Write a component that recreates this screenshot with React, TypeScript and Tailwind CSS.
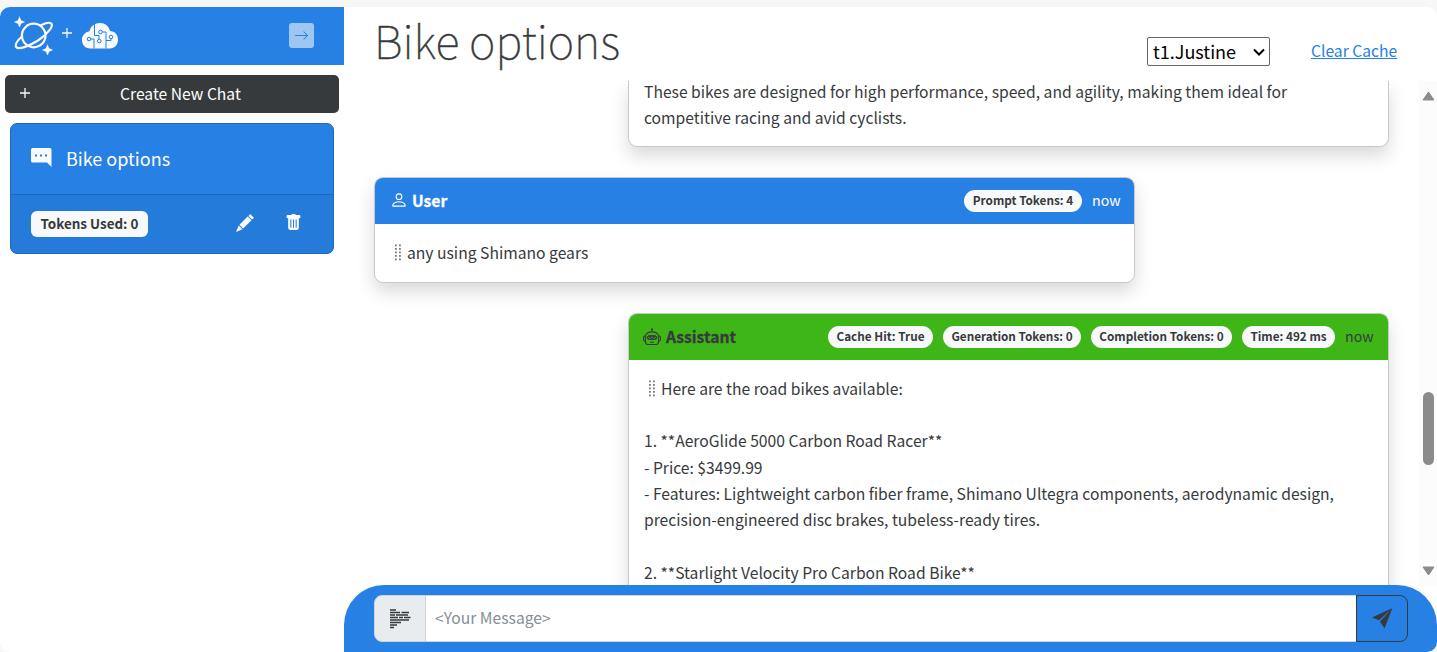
import React from "react";
import { BsArrowRight, BsTrashFill, BsPerson } from "react-icons/bs";

const FONT = "font-['Noto_Sans_CJK_SC',sans-serif]";

function Planet() {
  return (
    <svg width="40" height="40" viewBox="0 0 40 40" fill="none" stroke="#f8f9fa" strokeWidth="2.200" strokeLinecap="round">
      <circle cx="19.700" cy="20.500" r="11.800" />
      <path d="M8 21.500C3 26 .8 30 2.200 32C4.500 35 14.500 31.500 24 25.500C33 19.500 39.500 11.500 37.500 8.800C36.300 7.200 32.500 7.600 27.500 10" />
      <path d="M5.500 2L7 5.500L10.500 7L7 8.500L5.500 12L4 8.500L0.500 7L4 5.500Z M33.500 30L35 33.500L38.500 35L35 36.500L33.500 40L32 36.500L28.500 35L32 33.500Z" fill="#f8f9fa" stroke="#f8f9fa" strokeWidth=".5" />
    </svg>
  );
}

function Cloud() {
  return (
    <svg width="36" height="26" viewBox="0 0 36 26" fill="none">
      <path d="M8.500 25.500C3.500 25.500 0 22 0 17C0 12.500 3 9 7.500 8.300C8.500 3 13 0 18 0C23 0 27 3 28 8C32.500 8 36 11.500 36 16.500C36 22 32.500 25.500 28 25.500Z" fill="#f8f9fa" />
      <g stroke="#2780e3" strokeWidth="1">
        <path d="M12.500 1V12.500H17V16M8.500 16H12V25.500M20.500 9H24V25.500M24 17.500H29V15.500" />
        <circle cx="7" cy="16" r="1.800" /><circle cx="18.500" cy="9" r="1.800" /><circle cx="17.300" cy="18" r="1.800" /><circle cx="29" cy="14" r="1.800" />
      </g>
    </svg>
  );
}

function Plus({ size }: { size: number }) {
  return <svg width={size} height={size} viewBox="0 0 10 10" stroke="#f8f9fa" strokeWidth="1.300"><path d="M5 0V10M0 5H10" /></svg>;
}

function Robot() {
  return (
    <svg width="18" height="18" viewBox="0 0 18 18" fill="none" stroke="#373a3c" strokeWidth="1.100">
      <path d="M9 1V3.500M2.500 8C3.500 2.500 14.500 2.500 15.500 8V14C15.500 15.500 14.500 16.500 13 16.500H5C3.500 16.500 2.500 15.500 2.500 14ZM2.500 8H1.500Q.6 8 .6 9V12Q.6 13 1.500 13H2.500M15.500 8H16.500Q17.400 8 17.400 9V12Q17.400 13 16.500 13H15.500M7 14.300H11" />
      <path d="M2.500 8H15.500" stroke="#3fb618" strokeWidth="1.400" />
      <path d="M2.500 7V9M15.500 7V9" />
      <rect x="4.200" y="7.500" width="9.600" height="4" rx="2" fill="#373a3c" strokeWidth=".8" />
      <path d="M5 9L7 10.500L9 9L11 10.500L13 9" stroke="#3fb618" strokeWidth=".8" />
      <circle cx="9" cy="1.300" r="1" fill="#373a3c" stroke="none" />
    </svg>
  );
}

function Grip() {
  return <svg className="mr-[5px] ml-[5px] inline-block align-[-2px]" width="7" height="17" viewBox="0 0 7 17" fill="#77777a">{[0, 1, 2, 3, 4].map((i) => <g key={i}><rect x="0" y={0.5 + i * 3.5} width="1.800" height="1.800" /><rect x="4" y={0.5 + i * 3.5} width="1.800" height="1.800" /></g>)}</svg>;
}

function Badge({ children, w }: { children: React.ReactNode; w: string }) {
  return <span className={`flex h-[22px] shrink-0 items-center justify-center rounded-full bg-[#f8f9fa] pb-px text-[11.750px] font-bold whitespace-nowrap text-[#373a3c] ${w}`}>{children}</span>;
}

const CARD = "shrink-0 overflow-hidden rounded-[9px] border border-[#c9c9c9] bg-white shadow-[0_9px_18px_rgba(0,0,0,0.15)]";

export default function App() {
  return (
    <div className={`h-[652px] w-[1437px] overflow-hidden bg-[#f7f7f7] pt-[7px] text-[15.660px] leading-[26.300px] text-[#373a3c] ${FONT}`}>
      <div className="flex h-[645px] overflow-hidden rounded-[10px] bg-white">
        <aside className="w-[344px] shrink-0">
          <header className="flex h-[58px] items-start bg-[#2780e3] pt-[8px] pl-[14px]">
            <Planet />
            <div className="mt-[13px] ml-[8px]"><Plus size={10} /></div>
            <div className="mt-[8px] ml-[10px]"><Cloud /></div>
            <div className="mt-[8px] ml-[171px] flex size-[25px] items-center justify-center rounded-[3px] bg-[#9ec6f2] text-[#2780e3]"><BsArrowRight size={15} /></div>
          </header>
          <button className="mt-[10px] ml-[5px] flex h-[38px] w-[334px] items-center rounded-[5px] bg-[#373a3c] text-white">
            <span className="mb-[2px] ml-[15px] flex w-[10px]"><Plus size={10} /></span>
            <span className="ml-[90px]">Create New Chat</span>
          </button>
          <div className="mt-[10px] ml-[10px] h-[131px] w-[324px] overflow-hidden rounded-[7px] border border-[#2168b8] bg-[#2780e3] text-white">
            <div className="flex h-[71px] items-center border-b border-[#2168b8] pb-[2px] pl-[20px] text-[18px]">
              <svg width="21" height="20" viewBox="0 0 21 20"><path d="M1.500 0H19Q20.500 0 20.500 1.500V19L16 14.500H1.500Q0 14.500 0 13V1.500Q0 0 1.500 0Z" fill="#f8f9fa" /><path d="M4 6.500H6V8.500H4ZM9 6.500H11V8.500H9ZM14 6.500H16V8.500H14Z" fill="#2780e3" /></svg>
              <span className="ml-[14px]">Bike options</span>
            </div>
            <div className="flex h-[59px] items-center bg-[#257bda] pb-[2px] pl-[20px]">
              <span className="flex h-[26px] w-[117px] items-center justify-center rounded-[6px] bg-[#f8f9fa] text-[13.450px] font-bold text-[#373a3c]">Tokens Used: 0</span>
              <svg className="mb-[2px] ml-[88px]" width="18" height="18" viewBox="0 0 18 18" fill="#f8f9fa"><path d="M14.200 0L18 3.800L16 5.600L12.400 2ZM11.700 2.500L15.500 6.300L7.200 14.600L3.400 10.800ZM2.700 11.400L6.600 15.300L0 18Z" /></svg>
              <BsTrashFill className="mb-[2px] ml-[31px]" size={17} />
            </div>
          </div>
        </aside>
        <main className="flex w-[1093px] flex-col">
          <header className="flex h-[74px] shrink-0 items-start pl-[31px]">
            <h1 className="-ml-px w-[773px] text-[45px] leading-[66px] font-thin [-webkit-text-stroke:0.400px_#373a3c]">Bike options</h1>
            <div className="mt-[30px] flex h-[29px] w-[123px] items-center rounded-[2px] border border-[#666] pl-[5px] text-[18px] text-black"><span>t1.Justine</span><svg className="mr-[4px] ml-auto" width="12" height="8" viewBox="0 0 12 8" fill="none" stroke="black" strokeWidth="2"><path d="M1 1.500L6 6.500L11 1.500" /></svg></div>
            <a className="mt-[31px] ml-[41px] text-[#2780e3] underline">Clear Cache</a>
          </header>
          <div className="flex h-[504px] shrink-0">
            <section className="flex h-[504px] w-[1075px] flex-col overflow-hidden pl-[30px]">
              <div className={`ml-[254px] h-[66px] w-[761px] rounded-t-none border-t-0 px-[15px] ${CARD}`}>
                <p className="-mt-[2px]">These bikes are designed for high performance, speed, and agility, making them ideal for<br />competitive racing and avid cyclists.</p>
              </div>
              <article className={`mt-[30px] h-[106px] w-[761px] ${CARD}`}>
                <div className="flex h-[46px] items-center bg-[#2780e3] pr-[14px] pl-[15px] text-white">
                  <BsPerson className="mb-[2px]" size={18} /><b className="ml-[4px] [-webkit-text-stroke:0.300px_white]">User</b>
                  <div className="ml-auto flex items-center"><Badge w="w-[118px]">Prompt Tokens: 4</Badge><span className="ml-[10px] w-[28px] pb-px text-[14.200px]">now</span></div>
                </div>
                <p className="px-[15px] pt-[16px]"><Grip />any using Shimano gears</p>
              </article>
              <article className={`mt-[30px] ml-[254px] h-[360px] w-[761px] ${CARD}`}>
                <div className="flex h-[46px] items-center bg-[#3fb618] pr-[15px] pl-[14px]">
                  <Robot /><b className="ml-[5px] [-webkit-text-stroke:0.300px_#373a3c]">Assistant</b>
                  <div className="ml-auto flex items-center gap-[10px]"><Badge w="w-[105px]">Cache Hit: True</Badge><Badge w="w-[138px]">Generation Tokens: 0</Badge><Badge w="w-[141px]">Completion Tokens: 0</Badge><Badge w="w-[93px]">Time: 492 ms</Badge><span className="w-[28px] pb-px text-[14.200px]">now</span></div>
                </div>
                <p className="px-[15px] pt-[15.700px]"><Grip />Here are the road bikes available:<br /><br />1. **AeroGlide 5000 Carbon Road Racer**<br />- Price: $3499.99<br />- Features: Lightweight carbon fiber frame, Shimano Ultegra components, aerodynamic design,<br />precision-engineered disc brakes, tubeless-ready tires.<br /><br />2. **Starlight Velocity Pro Carbon Road Bike**</p>
              </article>
            </section>
            <div className="flex w-[18px] flex-col items-center bg-[#fcfcfc]">
              <svg className="mt-[10px]" width="13" height="10" viewBox="0 0 13 10"><path d="M6.500 1L12 9H1Z" fill="#8b8b8b" stroke="#8b8b8b" strokeLinejoin="round" /></svg>
              <div className="mt-[291px] h-[73px] w-[11px] rounded-full bg-[#8b8b8b]" />
              <svg className="mt-[101px]" width="13" height="10" viewBox="0 0 13 10"><path d="M6.500 9L12 1H1Z" fill="#8b8b8b" stroke="#8b8b8b" strokeLinejoin="round" /></svg>
            </div>
          </div>
          <footer className="flex h-[67px] shrink-0 items-start rounded-t-[40px] bg-[#2780e3] pt-[10px] pl-[30px]">
            <div className="flex h-[47px] w-[52px] items-center justify-center rounded-l-[8px] border border-[#ced4da] bg-[#e9ecef]">
              <svg width="21" height="20" viewBox="0 0 21 20" stroke="#373a3c" strokeWidth="1.300"><path d="M0 1H6M0 3.500H10M11.500 3.500H19M0 6H5M6 6H18M0 8.500H8M9 8.500H13M14 8.500H20.500M0 11H19M0 13.500H11M0 16H7M0 18.500H4" /></svg>
            </div>
            <div className="flex h-[47px] w-[930px] items-center border-y border-[#ced4da] bg-white pl-[9px] text-[#868e96]">&lt;Your Message&gt;</div>
            <div className="flex h-[47px] w-[52px] items-center justify-center rounded-r-[8px] border border-[#373a3c]">
              <svg width="21" height="21" viewBox="0 0 21 21" fill="#373a3c"><path d="M0 9.500L20.500 0L7 12.300ZM20.500 0L12.500 20.500L8 13.500Z" /></svg>
            </div>
          </footer>
        </main>
      </div>
    </div>
  );
}
